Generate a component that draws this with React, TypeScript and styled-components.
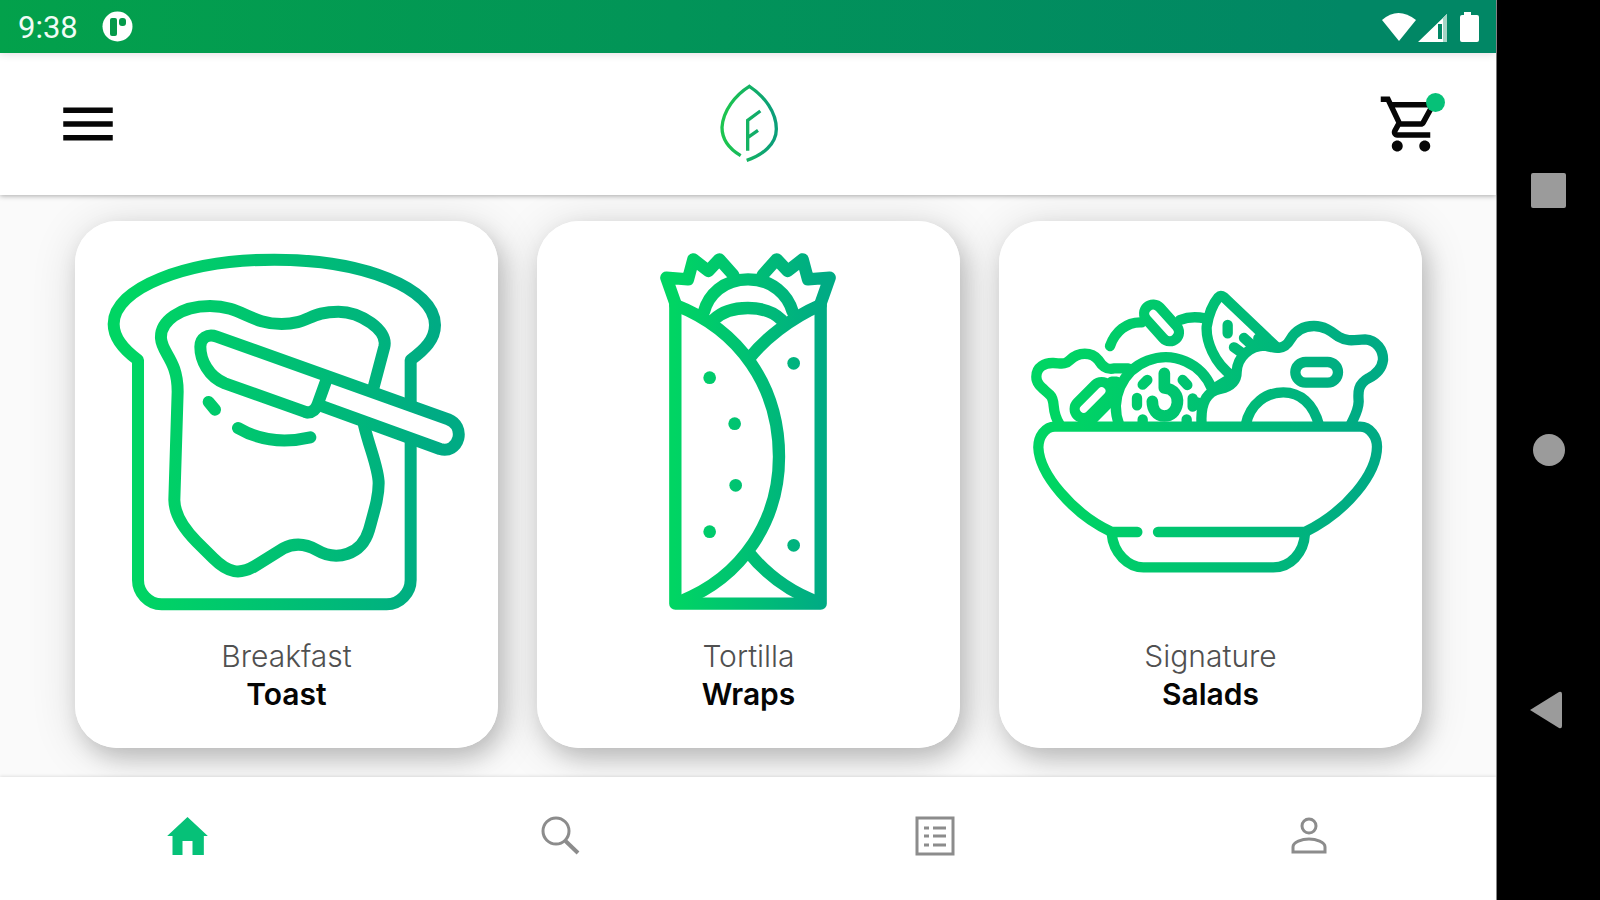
import React from "react";
import styled, { createGlobalStyle } from "styled-components";
import { MdMenu, MdOutlineShoppingCart } from "react-icons/md";

const GlobalStyle = createGlobalStyle`
  *, *::before, *::after { box-sizing: border-box; }
  body { margin: 0; background: #000; font-family: "Inter", "Liberation Sans", sans-serif; }
  button { border: 0; padding: 0; background: none; cursor: pointer; color: inherit; font: inherit; }
  a { color: inherit; text-decoration: none; }
  svg { display: block; }
`;

const Device = styled.div`
  display: flex;
  min-height: 100vh;
  background: #000;
`;

const Screen = styled.div`
  flex: 1;
  min-width: 0;
  display: flex;
  flex-direction: column;
  background: #fff;
  border-right: 1px solid #8a8a8a;
`;

const StatusBar = styled.div`
  position: relative;
  z-index: 2;
  display: flex;
  align-items: center;
  justify-content: space-between;
  height: 53px;
  padding: 0 16px 0 18px;
  background: linear-gradient(90deg, #03a14b, #018765 90%);
  box-shadow: 0 1px 8px rgba(60, 0, 40, 0.14);
`;

const StatusGroup = styled.div<{ $gap: number }>`
  display: flex;
  align-items: center;
  gap: ${(p) => p.$gap}px;
`;

const Clock = styled.time`
  padding-top: 2px;
  font-family: "Roboto", sans-serif;
  font-size: 31px;
  line-height: 36px;
  color: #f0fcf5;
`;

const Header = styled.header`
  position: relative;
  z-index: 1;
  display: grid;
  grid-template-columns: 1fr auto 1fr;
  align-items: center;
  height: 142px;
  padding: 0 52px 0 55px;
  background: #fff;
  box-shadow: 0 1px 5px rgba(0, 0, 0, 0.32);
`;

const IconButton = styled.button<{ $end?: boolean }>`
  position: relative;
  justify-self: ${(p) => (p.$end ? "end" : "start")};
  color: #060606;
`;

const Badge = styled.span`
  position: absolute;
  top: 2px;
  right: -1px;
  width: 19px;
  height: 19px;
  border-radius: 50%;
  background: #06c178;
`;

const Main = styled.main`
  flex: 1;
  padding: 26px 74px 29px 75px;
  overflow: hidden;
  background: #fafafa;
`;

const CardGrid = styled.div`
  display: grid;
  grid-template-columns: repeat(3, 1fr);
  gap: 39px;
`;

const CardSlot = styled.div`
  display: grid;
  border-radius: 42px;
  box-shadow: 6px 10px 22px rgba(0, 0, 0, 0.18), 2px 6px 48px rgba(0, 0, 0, 0.14);
`;

const Card = styled.a`
  position: relative;
  display: flex;
  flex-direction: column;
  gap: 26px;
  padding: 33px 33px 35px;
  border-radius: 42px;
  background: #fff;
`;

const Illustration = styled.svg`
  width: 100%;
  height: auto;
  overflow: visible;
  fill: none;
  stroke-linecap: round;
  stroke-linejoin: round;
`;

const Caption = styled.span`
  display: flex;
  flex-direction: column;
  text-align: center;
  font-size: 30px;
  line-height: 38px;
  font-weight: 300;
  color: #505050;

  strong {
    font-weight: 600;
    color: #050505;
  }
`;

const TabBar = styled.nav`
  position: relative;
  display: flex;
  height: 123px;
  background: #fff;
  box-shadow: 0 -1px 3px rgba(0, 0, 0, 0.1);
`;

const Tab = styled.a<{ $active?: boolean }>`
  flex: 1;
  display: flex;
  justify-content: center;
  align-items: center;
  padding-bottom: 6px;
  color: ${(p) => (p.$active ? "#06c178" : "#8c8c8c")};
`;

const SystemNav = styled.nav`
  display: flex;
  flex-direction: column;
  align-items: center;
  justify-content: space-between;
  width: 103px;
  padding: 170px 0;
  background: #000;
`;

const SystemButton = styled.button`
  display: grid;
  place-items: center;
  width: 40px;
  height: 40px;
`;

type GradientProps = { id: string; x1: number; x2: number };

const Gradient = ({ id, x1, x2 }: GradientProps) => (
  <linearGradient id={id} gradientUnits="userSpaceOnUse" x1={x1} x2={x2} y1="0" y2="0">
    <stop offset="0.08" stopColor="#00d563" />
    <stop offset="0.92" stopColor="#00ab84" />
  </linearGradient>
);

const Toast = () => (
  <Illustration viewBox="114 132 1071 1071" stroke="url(#toast)" strokeWidth="36" aria-hidden="true">
    <Gradient id="toast" x1={114} x2={1185} />
    <path d="M1022 575V450C1065 418 1095 388 1095 345C1095 235 880 149 613 149C345 149 131 235 131 342C131 385 160 418 204 450V1110C204 1148 235 1183 275 1183H950C990 1183 1022 1148 1022 1110V695" />
    <path d="M910 535L943 410C955 360 870 305 805 305C720 305 715 342 635 342C540 342 515 288 420 288C330 288 270 335 273 385C276 430 323 450 323 545L313 870C314 920 345 960 380 995L430 1045C475 1090 510 1095 555 1068L640 1015C670 1000 705 1000 740 1020C800 1055 875 1035 897 960C915 895 926 860 926 820C926 775 900 720 882 645" />
    <path d="M710 607L465 520C415 500 391 450 391 410C391 385 412 370 440 380L1135 628C1160 638 1170 662 1165 685C1158 712 1135 724 1110 717L760 590" />
    <path d="M770 508L743 583Q733 610 710 607M416 576L435 599M504 654Q600 710 721 682" />
  </Illustration>
);

const Wrap = () => (
  <Illustration viewBox="-180 72 1071 1071" stroke="url(#wrap)" strokeWidth="37" aria-hidden="true">
    <Gradient id="wrap" x1={90} x2={618} />
    <path d="M310 135L268 88L235 123L190 88L174 148L109 143L136 220V1121H572V220L599 143L534 148L518 88L473 123L440 88L398 135" />
    <path d="M222 245C235 195 280 148 354 148C428 148 473 195 488 245M250 270C300 222 408 222 455 270" />
    <path d="M136 225C330 300 447 470 447 680C447 870 340 1040 150 1115M572 225C480 265 400 330 358 385M354 965C410 1035 480 1085 560 1115" />
    <g fill="url(#wrap)" stroke="none">
      <circle cx="239" cy="443" r="19" />
      <circle cx="314" cy="581" r="19" />
      <circle cx="317" cy="766" r="19" />
      <circle cx="239" cy="905" r="19" />
      <circle cx="491" cy="400" r="19" />
      <circle cx="491" cy="946" r="19" />
    </g>
  </Illustration>
);

const Salad = () => (
  <Illustration viewBox="96 -18 1071 1071" stroke="url(#salad)" strokeWidth="31" aria-hidden="true">
    <Gradient id="salad" x1={96} x2={1167} />
    <path d="M412 816H335C215 760 118 640 115 562C115 530 135 500 165 500H1080C1110 500 1131 530 1131 560C1131 640 1040 755 915 816H474" />
    <path d="M335 820C340 880 385 922 430 922H820C870 922 912 880 915 820" />
    <path d="M180 495C150 450 170 425 150 405C130 385 109 375 109 350C109 320 135 308 160 309C185 310 195 315 210 300C235 275 275 275 295 300C310 325 325 330 345 325H385" />
    <rect x="213" y="393" width="130" height="54" rx="27" transform="rotate(-45 278 420)" />
    <path d="M335 365H350M250 480H275L345 410" />
    <path d="M330 258C345 215 380 185 425 187M540 180C560 172 590 170 615 175" />
    <rect x="420" y="162" width="129" height="54" rx="27" transform="rotate(48 485 189)" />
    <path d="M358 495A148 148 0 1 1 636 387" />
    <path strokeWidth="35" d="M493 340V384C522 386 535 408 532 430C528 456 512 468 493 468C470 468 457 448 457 424" />
    <path d="M428 374L442 360M548 360L562 375M411 414V436M578 415V440L594 428M428 478V488M560 478V488" />
    <path d="M700 350C640 310 618 240 620 200C625 165 640 130 655 112Q662 105 672 112L830 262M683 195V220M732 234L752 252M702 262L722 276M775 235L795 252" />
    <path d="M640 387L700 350" />
    <path d="M605 495C600 430 620 395 660 387C690 380 710 365 710 335C712 290 750 257 795 257C820 262 850 275 870 240C890 205 920 198 942 198C975 198 995 215 1015 230C1045 248 1070 238 1095 238C1130 240 1150 270 1149 300C1145 330 1125 345 1105 355C1070 375 1075 400 1076 425C1075 455 1060 475 1052 495" />
    <rect x="886" y="306" width="128" height="62" rx="31" />
    <path d="M737 495C750 430 800 397 850 397C900 397 940 430 957 495" />
  </Illustration>
);

const LeafLogo = () => (
  <svg width="64" height="84" viewBox="170 69 192 252" fill="none" stroke="url(#leaf)" strokeWidth="10" role="img" aria-label="Leaf logo">
    <linearGradient id="leaf" gradientUnits="userSpaceOnUse" x1="178" x2="350" y1="0" y2="0">
      <stop offset="0.1" stopColor="#1cc450" />
      <stop offset="0.9" stopColor="#0b9f78" />
    </linearGradient>
    <path d="M238 290C204 270 182 240 182 205C185 155 222 108 264 82C310 112 345 160 345 210C345 255 305 288 256 304" />
    <path d="M259 275V184L297 156M260 235L290 214" />
  </svg>
);

const cards = [
  { kind: "Breakfast", name: "Toast", Art: Toast },
  { kind: "Tortilla", name: "Wraps", Art: Wrap },
  { kind: "Signature", name: "Salads", Art: Salad },
];

export default function App() {
  return (
    <Device>
      <GlobalStyle />
      <Screen>
        <StatusBar>
          <StatusGroup $gap={24}>
            <Clock>9:38</Clock>
            <svg width="31" height="31" viewBox="0 0 31 31" aria-hidden="true">
              <circle cx="15.500" cy="15.500" r="15" fill="#fff" />
              <rect x="8" y="7" width="7" height="18" rx="2" fill="#049a4a" />
              <rect x="17" y="7" width="7" height="8" rx="3" fill="#049a4a" />
            </svg>
          </StatusGroup>
          <svg width="100" height="32" viewBox="0 0 100 32" fill="#fff" aria-hidden="true">
            <path d="M2 9Q18 -5 36 9L19 30Z" />
            <path fillRule="evenodd" d="M38 31L67 3V31ZM58 13V28H62V13Z" />
            <path d="M63 7L67 3V31H63Z" fill="#a5d5c6" />
            <path d="M84 1H91V4H97Q99 4 99 6V29Q99 31 97 31H82Q80 31 80 29V6Q80 4 82 4H84Z" />
          </svg>
        </StatusBar>
        <Header>
          <IconButton type="button" aria-label="Menu">
            <MdMenu size={66} />
          </IconButton>
          <LeafLogo />
          <IconButton type="button" aria-label="Cart" $end>
            <MdOutlineShoppingCart size={66} />
            <Badge />
          </IconButton>
        </Header>
        <Main>
          <CardGrid>
            {cards.map(({ kind, name, Art }) => (
              <CardSlot key={name}>
                <Card href="#">
                  <Art />
                  <Caption>
                    <span>{kind}</span>
                    <strong>{name}</strong>
                  </Caption>
                </Card>
              </CardSlot>
            ))}
          </CardGrid>
        </Main>
        <TabBar>
          <Tab href="#" aria-label="Home" $active>
            <svg width="41" height="38" viewBox="0 0 122 114" fill="currentColor" aria-hidden="true">
              <path d="M61 0L122 57H110V114H76V72H46V114H16V57H0Z" />
            </svg>
          </Tab>
          <Tab href="#" aria-label="Search">
            <svg width="40" height="39" viewBox="0 0 40 39" fill="none" stroke="currentColor" strokeWidth="3" aria-hidden="true">
              <circle cx="15" cy="15" r="13" />
              <path d="M24.500 25L37 37" strokeWidth="4" />
            </svg>
          </Tab>
          <Tab href="#" aria-label="Orders">
            <svg width="40" height="40" viewBox="0 0 40 40" fill="none" stroke="currentColor" strokeWidth="3" aria-hidden="true">
              <rect x="2" y="2" width="36" height="36" />
              <path d="M9 12H14M18 12H31M9 20H14M18 20H31M9 29H14M18 29H31" />
            </svg>
          </Tab>
          <Tab href="#" aria-label="Account">
            <svg width="36" height="37" viewBox="0 0 36 37" fill="none" stroke="currentColor" strokeWidth="3" aria-hidden="true">
              <circle cx="18" cy="9" r="7" />
              <path d="M2 35V30C2 25 11 22 18 22C25 22 34 25 34 30V35Z" />
            </svg>
          </Tab>
        </TabBar>
      </Screen>
      <SystemNav>
        <SystemButton type="button" aria-label="Recent apps">
          <svg width="35" height="35" viewBox="0 0 35 35" fill="#9b9b9b"><rect width="35" height="35" rx="2" /></svg>
        </SystemButton>
        <SystemButton type="button" aria-label="Go home">
          <svg width="32" height="32" viewBox="0 0 32 32" fill="#9b9b9b"><circle cx="16" cy="16" r="16" /></svg>
        </SystemButton>
        <SystemButton type="button" aria-label="Back">
          <svg width="37" height="38" viewBox="0 0 37 38" fill="#9b9b9b"><path d="M0 19L29 1Q32 0 32 3V35Q32 38 29 37Z" /></svg>
        </SystemButton>
      </SystemNav>
    </Device>
  );
}
